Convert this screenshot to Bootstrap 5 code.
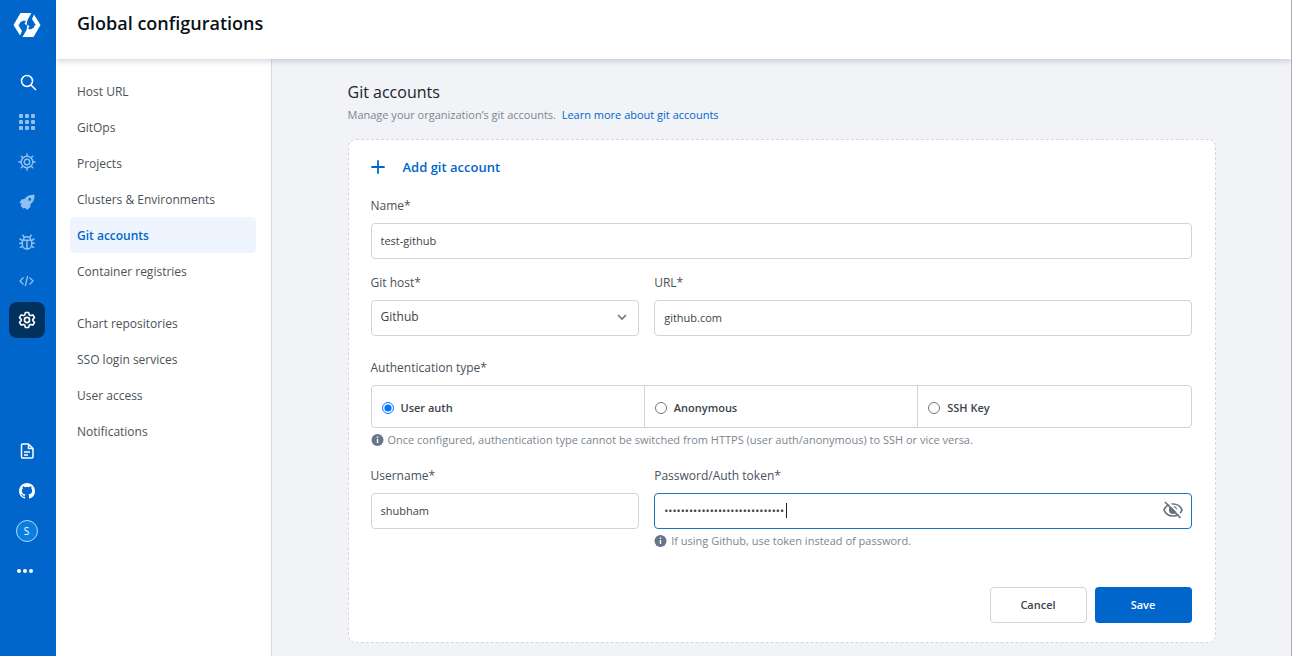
<!DOCTYPE html>
<html lang="en">
<head>
<meta charset="utf-8">
<meta name="viewport" content="width=device-width, initial-scale=1">
<title>Global configurations</title>
<link href="https://cdn.jsdelivr.net/npm/bootstrap@5.3.0/dist/css/bootstrap.min.css" rel="stylesheet">
<style>
  :root { --blue: #0066cc; --ink: #3b444c; --line: #d0d4d9; --muted: #7c8690; }
  body { font-family: "Open Sans", "Noto Sans", sans-serif; font-size: 12px; line-height: 20px; color: var(--ink); background: #fff; border-right: 1px solid #a9adb3; border-bottom: 1px solid #b9bdc1; }
  a { text-decoration: none; color: var(--blue); }
  .rail { width: 56px; background: var(--blue); padding: 5px 3px 65px 0; }
  .rail a { width: 36px; height: 36px; margin: 2px 0; border-radius: 8px; color: #fff; display: flex; align-items: center; justify-content: center; }
  .rail a.dim { color: #8fc0f2; }
  .rail a.current { background: #02305f; }
  .rail .brand { height: 40px; margin: 0 0 17px; }
  .rail .compact { height: 34px; }
  .avatar { width: 22px; height: 22px; border: 1px solid #b5d8fa; border-radius: 50%; background: #0b7fe0; font-size: 10px; line-height: 20px; text-align: center; }
  .topbar { height: 59px; padding: 8px 21px; box-shadow: 0 2px 6px rgba(40, 60, 100, .22); position: relative; z-index: 1; }
  .topbar h1 { font-size: 18px; line-height: 30px; font-weight: 600; color: #0a1218; margin: 0; }
  .side { width: 216px; border-right: 1px solid #d6dbe4; padding: 14px 15px 14px 14px; }
  .side a { display: block; padding: 9px 7px 7px; border-radius: 4px; color: #4a5259; }
  .side a.active { background: #eef5fe; color: var(--blue); font-weight: 600; }
  .content { background: #f1f3f7; padding: 21px 20px 13px; }
  .pane { max-width: 868px; margin: 0 auto; }
  .pane h2 { font-size: 16px; line-height: 24px; font-weight: 400; color: #1b2329; margin: 0 0 1px; }
  .intro, .hint { font-size: 11px; color: var(--muted); }
  .sheet { background: #fff; border: 1px dashed #d3d6da; border-radius: 8px; padding: 17px 23px 19px 22px; margin-top: 14px; }
  .add { font-size: 13px; font-weight: 600; color: var(--blue); gap: 18px; margin-bottom: 18px; }
  .split { display: grid; grid-template-columns: 1fr 2fr; gap: 15px; }
  .form-row + .form-row { margin-top: 14px; }
  .auth { margin-top: 22px; }
  .actions { margin-top: 36px; }
  .caption { display: block; margin-bottom: 6px; color: #4a5259; font-size: 12px; line-height: 22px; float: none; }
  .form-row .caption, .auth .caption, .creds .caption { padding: 0; }
  .field { height: 36px; font-size: 11px; padding: 0 9px 2px; border: 1px solid var(--line); border-radius: 4px; color: var(--ink); background-color: #fff; box-shadow: none; }
  .field:focus { box-shadow: none; border-color: #1f73b7; }
  select.field { font-size: 12px; appearance: none; }
  .form-row + .form-row, .auth, .creds { margin-top: 13px; }
  .auth { margin-top: 21px; }
  .creds { margin-top: 15px; }
  .chevron { position: absolute; right: 10px; top: 10px; pointer-events: none; }
  .secret { border-color: #1f73b7; padding-right: 36px; }
  .reveal { position: absolute; right: 8px; top: 6px; padding: 0; border: 0; background: none; line-height: 1; }
  .caret { position: absolute; left: 132px; top: 10px; width: 1px; height: 15px; background: #222; }
  .choices { border: 1px solid var(--line); border-radius: 4px; }
  .choices label { flex: 1; height: 41px; padding: 2px 10px 0; gap: 7px; font-size: 11px; font-weight: 600; }
  .choices label + label { border-left: 1px solid var(--line); }
  .choices input { width: 12px; height: 12px; margin: 0; }
  .hint { gap: 4px; margin-top: 2px; }
  .act { width: 97px; height: 36px; font-size: 11px; font-weight: 600; border-radius: 4px; padding: 1px 0 0; }
  .act-plain { border: 1px solid var(--line); color: var(--ink); background: #fff; }
  .act-main { background: var(--blue); color: #fff; }
</style>
</head>
<body class="d-flex min-vh-100">
<nav class="rail d-flex flex-column align-items-center flex-shrink-0" aria-label="Main">
  <a class="brand" href="#" aria-label="Home"><svg width="28" height="26" viewBox="0 0 28 26" fill="#fff"><path d="M7.500 1H18.500L14.500 8 13.500 13.500 11.500 11.500 13 9.500 11 8.500 7.500 10 6 13 5 12.500 9 19 7 23.500.5 13Z"/><path d="M7.500 1H18.500L14.500 8 13.500 13.500 11.500 11.500 13 9.500 11 8.500 7.500 10 6 13 5 12.500 9 19 7 23.500.5 13Z" transform="rotate(180 14 13)"/></svg></a>
  <a href="#" aria-label="Search"><svg class="ms-1" width="17" height="17" viewBox="0 0 17 17" fill="none" stroke="currentColor" stroke-width="1.500"><circle cx="7" cy="7" r="5.500"/><path d="m11 11 5 5"/></svg></a>
  <a class="dim" href="#" aria-label="Applications"><svg width="16" height="16" viewBox="0 0 16 16" fill="currentColor"><rect width="4" height="4" rx="1"/><rect x="6" width="4" height="4" rx="1"/><rect x="12" width="4" height="4" rx="1"/><rect y="6" width="4" height="4" rx="1"/><rect x="6" y="6" width="4" height="4" rx="1"/><rect x="12" y="6" width="4" height="4" rx="1"/><rect y="12" width="4" height="4" rx="1"/><rect x="6" y="12" width="4" height="4" rx="1"/><rect x="12" y="12" width="4" height="4" rx="1"/></svg></a>
  <a class="dim" href="#" aria-label="Jobs"><svg width="18" height="18" viewBox="0 0 18 18" fill="none" stroke="currentColor" stroke-width="1.400" stroke-linecap="round"><circle cx="9" cy="9" r="5.800"/><circle cx="9" cy="9" r="2.800"/><path d="M9 3V.8M9 15v2.200M3 9H.8M15 9h2.200M4.800 4.800 3.200 3.200M13.200 13.200l1.600 1.600M4.800 13.200l-1.600 1.600M13.200 4.800l1.600-1.600"/></svg></a>
  <a class="dim" href="#" aria-label="Deployments"><svg width="16" height="16" viewBox="0 0 16 16"><path fill="currentColor" fill-rule="evenodd" d="M15.500.8C11 .5 7.800 2 5.300 5L2.500 5.400.3 8.800l2.200.6-.8 2.500 2.600 2.600 2-.6L8 16l3.300-2.700.2-3c3-2.400 4.200-5.400 4-9.500zM10.800 4a1.400 1.400 0 1 1 0 2.800 1.400 1.400 0 0 1 0-2.800z"/></svg></a>
  <a class="dim" href="#" aria-label="Security"><svg width="16" height="16" viewBox="0 0 16 16" fill="none" stroke="currentColor" stroke-width="1.500" stroke-linecap="round"><path d="M3.300 6.300h9.400v4a4.700 4.700 0 0 1-9.400 0zM4.500 6C4.500 1.800 11.500 1.800 11.500 6M5 3 3.800 1.300M11 3l1.200-1.700M8 7v7.500M3.300 6.300 1 5M3.300 9.300H.8M12.700 6.300 15 5M12.700 9.300h2.500M3.800 12 1.500 13.300M12.200 12l2.300 1.300"/></svg></a>
  <a class="dim compact" href="#" aria-label="Bulk edit"><svg width="15" height="12" viewBox="0 0 15 12" fill="none" stroke="currentColor" stroke-width="1.300"><path d="M4.500 2.500 1 6l3.500 3.500M10.500 2.500 14 6l-3.500 3.500M8.700 1 6.300 11"/></svg></a>
  <a class="current" href="#" aria-label="Global configurations"><svg width="18" height="18" viewBox="0 0 18 18" fill="none" stroke="currentColor" stroke-width="1.600" stroke-linejoin="round"><circle cx="9" cy="9" r="2.600"/><path d="M7.400 1.500h3.200l.6 2.300 1.400.8 2.300-.7 1.600 2.800L14.800 8.300v1.400l1.700 1.600-1.600 2.800-2.300-.7-1.400.8-.6 2.300H7.400l-.6-2.300-1.400-.8-2.300.7-1.600-2.800 1.700-1.600V8.300L1.500 6.700l1.600-2.800 2.300.7 1.400-.8z"/></svg></a>
  <a class="mt-auto" href="#" aria-label="Documentation"><svg width="14" height="16" viewBox="0 0 14 16" fill="none" stroke="currentColor" stroke-width="1.500" stroke-linejoin="round"><path d="M2.500 1h6L13 5.500V14q0 1-1 1H2.500q-1 0-1-1V2q0-1 1-1zM8.500 1v4.500H13M4 9h6M4 12h4"/></svg></a>
  <a href="#" aria-label="GitHub"><svg width="16" height="16" viewBox="0 0 16 16" fill="currentColor"><path d="M8 0C3.580 0 0 3.580 0 8c0 3.540 2.290 6.530 5.470 7.590.4.070.55-.17.55-.38 0-.19-.01-.82-.01-1.490-2.010.37-2.530-.49-2.690-.94-.09-.23-.48-.94-.82-1.130-.28-.15-.68-.52-.01-.53.63-.01 1.080.58 1.230.82.72 1.210 1.870.87 2.330.66.07-.52.28-.87.51-1.070-1.780-.2-3.640-.89-3.640-3.950 0-.87.31-1.590.82-2.150-.08-.2-.36-1.020.08-2.120 0 0 .67-.21 2.200.82a7.600 7.600 0 0 1 4 0c1.530-1.040 2.200-.82 2.200-.82.44 1.100.16 1.920.08 2.120.51.56.82 1.270.82 2.150 0 3.070-1.870 3.750-3.650 3.950.29.25.54.73.54 1.480 0 1.070-.01 1.930-.01 2.200 0 .21.15.46.55.38A8 8 0 0 0 16 8c0-4.420-3.580-8-8-8z"/></svg></a>
  <a href="#" aria-label="Profile"><span class="avatar">S</span></a>
  <a href="#" aria-label="More"><svg class="me-1" width="16" height="4" viewBox="0 0 16 4" fill="currentColor"><circle cx="2" cy="2" r="2"/><circle cx="8" cy="2" r="2"/><circle cx="14" cy="2" r="2"/></svg></a>
</nav>
<div class="d-flex flex-column flex-grow-1">
  <header class="topbar"><h1>Global configurations</h1></header>
  <div class="d-flex flex-grow-1">
    <nav class="side flex-shrink-0" aria-label="Configurations">
      <a href="#">Host URL</a>
      <a href="#">GitOps</a>
      <a href="#">Projects</a>
      <a href="#">Clusters &amp; Environments</a>
      <a class="active" aria-current="page" href="#">Git accounts</a>
      <a class="mb-3" href="#">Container registries</a>
      <a href="#">Chart repositories</a>
      <a href="#">SSO login services</a>
      <a href="#">User access</a>
      <a href="#">Notifications</a>
    </nav>
    <main class="content flex-grow-1">
      <div class="pane">
        <h2>Git accounts</h2>
        <p class="intro mb-0">Manage your organization’s git accounts.&nbsp; <a href="#">Learn more about git accounts</a></p>
        <form class="sheet">
          <div class="add d-flex align-items-center"><svg width="14" height="14" viewBox="0 0 14 14" stroke="#0066cc" stroke-width="1.800" stroke-linecap="round"><path d="M7 1v12M1 7h12"/></svg>Add git account</div>
          <div class="form-row">
            <label class="caption" for="name">Name*</label>
            <input class="field form-control" id="name" value="test-github">
          </div>
          <div class="form-row split">
            <div>
              <label class="caption" for="host">Git host*</label>
              <div class="position-relative">
                <select class="field w-100" id="host"><option>Github</option></select>
                <svg class="chevron" width="14" height="14" viewBox="0 0 14 14" fill="none" stroke="#6b747c" stroke-width="1.600"><path d="m3 5 4 4 4-4"/></svg>
              </div>
            </div>
            <div>
              <label class="caption" for="url">URL*</label>
              <input class="field form-control" id="url" value="github.com">
            </div>
          </div>
          <fieldset class="auth">
            <legend class="caption">Authentication type*</legend>
            <div class="choices d-flex">
              <label class="d-flex align-items-center"><input type="radio" name="auth" checked>User auth</label>
              <label class="d-flex align-items-center"><input type="radio" name="auth">Anonymous</label>
              <label class="d-flex align-items-center"><input type="radio" name="auth">SSH Key</label>
            </div>
            <div class="hint d-flex align-items-center"><svg width="13" height="12" viewBox="0 0 13 12"><circle cx="6.500" cy="6" r="6" fill="#67758b"/><path d="M6.500 5v4M6.500 2.500V4" stroke="#fff" stroke-width="1.400"/></svg>Once configured, authentication type cannot be switched from HTTPS (user auth/anonymous) to SSH or vice versa.</div>
          </fieldset>
          <div class="creds split">
            <div>
              <label class="caption" for="user">Username*</label>
              <input class="field form-control" id="user" value="shubham">
            </div>
            <div>
              <label class="caption" for="token">Password/Auth token*</label>
              <div class="position-relative">
                <input class="field form-control secret" type="password" id="token" value="12345678901234567890123456789">
                <span class="caret"></span>
                <button class="reveal" type="button" aria-label="Show password"><svg width="22" height="22" viewBox="0 0 22 22" fill="none" stroke="#69727b" stroke-width="1.700"><path d="M2 11c3-8 15-8 18 0-3 8-15 8-18 0z"/><circle cx="11" cy="11" r="3.200" fill="#69727b"/><path stroke="#fff" stroke-width="2" d="m5 2 15 15.500"/><path d="m3 3 15.500 16"/></svg></button>
              </div>
              <div class="hint d-flex align-items-center"><svg width="13" height="12" viewBox="0 0 13 12"><circle cx="6.500" cy="6" r="6" fill="#67758b"/><path d="M6.500 5v4M6.500 2.500V4" stroke="#fff" stroke-width="1.400"/></svg>If using Github, use token instead of password.</div>
            </div>
          </div>
          <div class="actions d-flex justify-content-end gap-2">
            <button class="act act-plain btn" type="button">Cancel</button>
            <button class="act act-main btn" type="submit">Save</button>
          </div>
        </form>
      </div>
    </main>
  </div>
</div>
<script src="https://cdn.jsdelivr.net/npm/bootstrap@5.3.0/dist/js/bootstrap.bundle.min.js"></script>
</body>
</html>
